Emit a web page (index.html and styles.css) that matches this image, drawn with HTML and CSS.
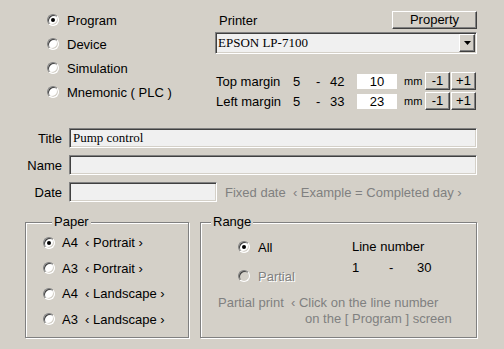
FILE: index.html
```html
<!DOCTYPE html>
<html>
<head>
  <link rel="stylesheet" href="styles.css">
</head>
<body>
  <div class="dialog">
    <div class="top">
      <div class="modes">
        <label class="opt"><span class="radio on"></span>Program</label>
        <label class="opt"><span class="radio"></span>Device</label>
        <label class="opt"><span class="radio"></span>Simulation</label>
        <label class="opt"><span class="radio"></span>Mnemonic ( PLC )</label>
      </div>

      <div class="printer">
        <div class="printer-head">
          <span class="printer-label">Printer</span>
          <button class="btn prop">Property</button>
        </div>
        <div class="combo">
          <span class="combo-text">EPSON LP-7100</span>
          <span class="combo-arrow">
            <svg width="7" height="4" viewBox="0 0 7 4"><path d="M0 0h7L3.5 4z" fill="#000"/></svg>
          </span>
        </div>
        <div class="margin-row first">
          <span class="m-label">Top margin</span>
          <span class="m-min">5</span>
          <span class="m-dash">-</span>
          <span class="m-max">42</span>
          <span class="m-value">10</span>
          <span class="m-unit">mm</span>
          <button class="btn step">-1</button>
          <button class="btn step">+1</button>
        </div>
        <div class="margin-row">
          <span class="m-label">Left margin</span>
          <span class="m-min">5</span>
          <span class="m-dash">-</span>
          <span class="m-max">33</span>
          <span class="m-value">23</span>
          <span class="m-unit">mm</span>
          <button class="btn step">-1</button>
          <button class="btn step">+1</button>
        </div>
      </div>
    </div>

    <div class="fields">
      <div class="field">
        <span class="field-label">Title</span>
        <div class="edit wide">Pump control</div>
      </div>
      <div class="field">
        <span class="field-label">Name</span>
        <div class="edit wide"></div>
      </div>
      <div class="field">
        <span class="field-label">Date</span>
        <div class="edit short"></div>
        <span class="hint">Fixed date &nbsp;‹ Example = Completed day ›</span>
      </div>
    </div>

    <div class="groups">
      <fieldset class="group paper">
        <legend>Paper</legend>
        <label class="opt paper-opt"><span class="radio on"></span>A4 &nbsp;‹ Portrait ›</label>
        <label class="opt paper-opt"><span class="radio"></span>A3 &nbsp;‹ Portrait ›</label>
        <label class="opt paper-opt"><span class="radio"></span>A4 &nbsp;‹ Landscape ›</label>
        <label class="opt paper-opt"><span class="radio"></span>A3 &nbsp;‹ Landscape ›</label>
      </fieldset>

      <fieldset class="group range">
        <legend>Range</legend>
        <div class="range-top">
          <div class="range-opts">
            <label class="opt range-opt"><span class="radio on"></span>All</label>
            <label class="opt range-opt disabled"><span class="radio"></span>Partial</label>
          </div>
          <div class="lines">
            <div class="lines-title">Line number</div>
            <div class="lines-nums">
              <span class="n-from">1</span>
              <span class="n-dash">-</span>
              <span>30</span>
            </div>
          </div>
        </div>
        <div class="note">Partial print &nbsp;‹ Click on the line number</div>
        <div class="note second">on the [ Program ] screen</div>
      </fieldset>
    </div>
  </div>
</body>
</html>
```

FILE: styles.css
```css
body {
  margin: 0;
  background-color: #d4d0c8;
  font-family: "Liberation Sans", Arial, sans-serif;
  font-size: 13px;
  color: #000;
}

.dialog {
  width: 504px;
  height: 349px;
  overflow: hidden;
}

/* radio buttons */
.opt {
  display: flex;
  align-items: center;
  height: 24px;
  white-space: pre;
}

.radio {
  box-sizing: border-box;
  width: 12px;
  height: 12px;
  margin-right: 8px;
  border-radius: 50%;
  background-color: #fff;
  border: 1px solid;
  border-color: #808080 #fff #fff #808080;
  box-shadow: inset 1px 1px 0 #404040, inset -1px -1px 0 #d4d0c8;
  display: flex;
  align-items: center;
  justify-content: center;
}

.radio.on::after {
  content: "";
  width: 4px;
  height: 4px;
  border-radius: 50%;
  background-color: #000;
}

.disabled {
  color: #808080;
  text-shadow: 1px 1px 0 #fff;
}

.disabled .radio {
  background-color: #d4d0c8;
}

/* raised buttons */
.btn {
  box-sizing: border-box;
  font-family: "Liberation Sans", Arial, sans-serif;
  font-size: 13px;
  color: #000;
  padding: 0;
  background-color: #d4d0c8;
  border: 1px solid;
  border-color: #fff #404040 #404040 #fff;
  box-shadow: inset -1px -1px 0 #808080;
}

/* top block */
.top {
  display: flex;
  height: 110px;
}

.modes {
  width: 168px;
  padding-left: 47px;
  padding-top: 8px;
}

.printer {
  width: 262px;
  padding-top: 11px;
}

.printer-head {
  display: flex;
  justify-content: space-between;
  align-items: center;
  height: 18px;
}

.printer-label {
  padding-left: 4px;
}

.prop {
  width: 85px;
  height: 18px;
  line-height: 14px;
}

.combo {
  box-sizing: border-box;
  display: flex;
  align-items: center;
  justify-content: space-between;
  height: 22px;
  margin-top: 3px;
  padding: 0 1px 0 2px;
  background-color: #f0f0f0;
  border: 1px solid;
  border-color: #808080 #fff #fff #808080;
  box-shadow: inset 1px 1px 0 #404040, inset -1px -1px 0 #d4d0c8;
}

.combo-text {
  font-family: "Liberation Serif", "Times New Roman", serif;
  font-size: 13px;
}

.combo-arrow {
  box-sizing: border-box;
  width: 16px;
  height: 18px;
  display: flex;
  align-items: center;
  justify-content: center;
  background-color: #d4d0c8;
  border: 1px solid;
  border-color: #fff #404040 #404040 #fff;
  box-shadow: inset -1px -1px 0 #808080;
}

.margin-row {
  display: flex;
  align-items: center;
  height: 18px;
  margin-top: 2px;
  padding-left: 1px;
}

.margin-row.first {
  margin-top: 18px;
}

.m-label { width: 77px; }
.m-min { width: 23px; }
.m-dash { width: 14px; }
.m-max { width: 27px; }

.m-value {
  width: 40px;
  height: 15px;
  line-height: 15px;
  text-align: center;
  background-color: #fff;
}

.m-unit {
  width: 21px;
  margin-left: 7px;
  font-size: 11px;
}

.step {
  width: 25px;
  height: 18px;
  line-height: 14px;
}

.step + .step {
  margin-left: 1px;
}

/* title / name / date */
.fields {
  margin-top: 18px;
}

.field {
  display: flex;
  align-items: center;
  height: 20px;
  margin-bottom: 7px;
}

.field-label {
  width: 62px;
  margin-right: 7px;
  text-align: right;
}

.edit {
  box-sizing: border-box;
  height: 20px;
  padding: 0 3px;
  line-height: 18px;
  font-family: "Liberation Serif", "Times New Roman", serif;
  font-size: 13px;
  background-color: #f0f0f0;
  border: 1px solid;
  border-color: #808080 #fff #fff #808080;
  box-shadow: inset 1px 1px 0 #404040, inset -1px -1px 0 #d4d0c8;
}

.edit.wide { width: 408px; }
.edit.short { width: 148px; }

.hint {
  margin-left: 8px;
  color: #808080;
  white-space: pre;
}

/* group boxes */
.groups {
  display: flex;
  margin-top: 13px;
}

.group {
  box-sizing: border-box;
  height: 123px;
  margin: 0;
  padding: 0;
  border: 1px solid #808080;
  box-shadow: 1px 1px 0 #fff, inset 1px 1px 0 #fff;
}

.group legend {
  margin-left: 9px;
  padding: 0 2px;
  line-height: 14px;
  background-color: #d4d0c8;
}

.paper {
  width: 164px;
  margin-left: 25px;
  padding-left: 17px;
  padding-top: 1px;
}

.paper-opt {
  height: 25.5px;
}

.paper-opt .radio {
  margin-right: 7px;
}

.range {
  width: 277px;
  margin-left: 11px;
}

.range legend {
  margin-left: 10px;
}

.range-top {
  display: flex;
  padding-top: 6px;
  padding-left: 37px;
}

.range-opts {
  width: 114px;
}

.range-opt + .range-opt {
  margin-top: 5px;
}

.lines-title {
  height: 24px;
  line-height: 24px;
}

.lines-nums {
  display: flex;
  height: 18px;
  line-height: 18px;
}

.n-from { width: 37px; }
.n-dash { width: 28px; }

.note {
  margin-top: 7px;
  padding-left: 17px;
  line-height: 16px;
  color: #808080;
  white-space: pre;
}

.note.second {
  margin-top: 0;
  padding-left: 104px;
}
```
